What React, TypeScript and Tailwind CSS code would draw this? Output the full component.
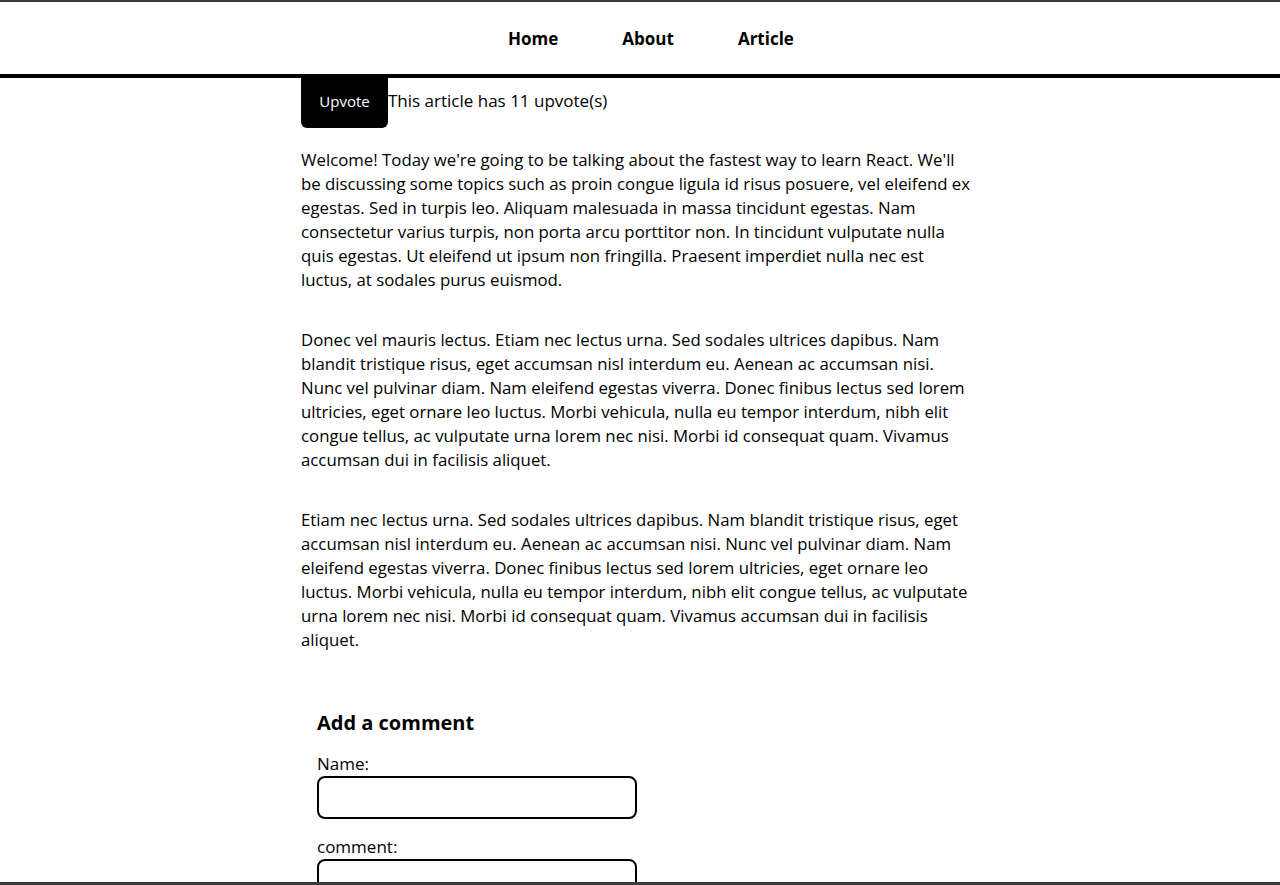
const paragraphs = [
  [
    "Welcome! Today we're going to be talking about the fastest way to learn React. We'll",
    "be discussing some topics such as proin congue ligula id risus posuere, vel eleifend ex",
    "egestas. Sed in turpis leo. Aliquam malesuada in massa tincidunt egestas. Nam",
    "consectetur varius turpis, non porta arcu porttitor non. In tincidunt vulputate nulla",
    "quis egestas. Ut eleifend ut ipsum non fringilla. Praesent imperdiet nulla nec est",
    "luctus, at sodales purus euismod.",
  ],
  [
    "Donec vel mauris lectus. Etiam nec lectus urna. Sed sodales ultrices dapibus. Nam",
    "blandit tristique risus, eget accumsan nisl interdum eu. Aenean ac accumsan nisi.",
    "Nunc vel pulvinar diam. Nam eleifend egestas viverra. Donec finibus lectus sed lorem",
    "ultricies, eget ornare leo luctus. Morbi vehicula, nulla eu tempor interdum, nibh elit",
    "congue tellus, ac vulputate urna lorem nec nisi. Morbi id consequat quam. Vivamus",
    "accumsan dui in facilisis aliquet.",
  ],
  [
    "Etiam nec lectus urna. Sed sodales ultrices dapibus. Nam blandit tristique risus, eget",
    "accumsan nisl interdum eu. Aenean ac accumsan nisi. Nunc vel pulvinar diam. Nam",
    "eleifend egestas viverra. Donec finibus lectus sed lorem ultricies, eget ornare leo",
    "luctus. Morbi vehicula, nulla eu tempor interdum, nibh elit congue tellus, ac vulputate",
    "urna lorem nec nisi. Morbi id consequat quam. Vivamus accumsan dui in facilisis",
    "aliquet.",
  ],
];

const App = () => {
  return (
    <div className="h-[885px] overflow-hidden border-t-2 border-b-[3px] border-[#3c3c3c] bg-white text-black font-['Open_Sans',sans-serif]">
      <nav className="h-[76px] border-b-4 border-black pl-[22px] pt-[2px] flex justify-center items-center">
        <ul className="flex items-center gap-[64px] text-[17px] font-bold">
          <li><a href="#">Home</a></li>
          <li><a href="#">About</a></li>
          <li><a href="#">Article</a></li>
        </ul>
      </nav>
      <div className="pl-[22px]">
        <main className="mx-auto w-[700px]">
          <div className="flex items-start">
            <button className="h-[50px] w-[87px] pb-[4px] bg-black text-white text-[15px] rounded-b-md">
              Upvote
            </button>
            <p className="text-[17px] leading-[24px] mt-[11px]">This article has 11 upvote(s)</p>
          </div>
          {paragraphs.map((lines, i) => (
            <p key={i} className="text-[16.8px] leading-[24px] mt-[20px] mb-[36px]">
              {lines.map((line, j) => (
                <span key={j}>
                  {line}
                  {j < lines.length - 1 && <br />}
                </span>
              ))}
            </p>
          ))}
          <div className="px-4 pt-[20px]">
            <h3 className="text-[20px] font-bold leading-[30px]">Add a comment</h3>
            <label className="block mt-[14px] text-[17px] leading-[24px]">
              Name:
              <input type="text" className="block w-[320px] h-[43px] border-2 border-black rounded-lg" />
            </label>
            <label className="block mt-[16px] text-[17px] leading-[24px]">
              comment:
              <textarea className="block w-[320px] h-[80px] border-2 border-black rounded-lg resize-none" />
            </label>
          </div>
        </main>
      </div>
    </div>
  );
};

export default App;
